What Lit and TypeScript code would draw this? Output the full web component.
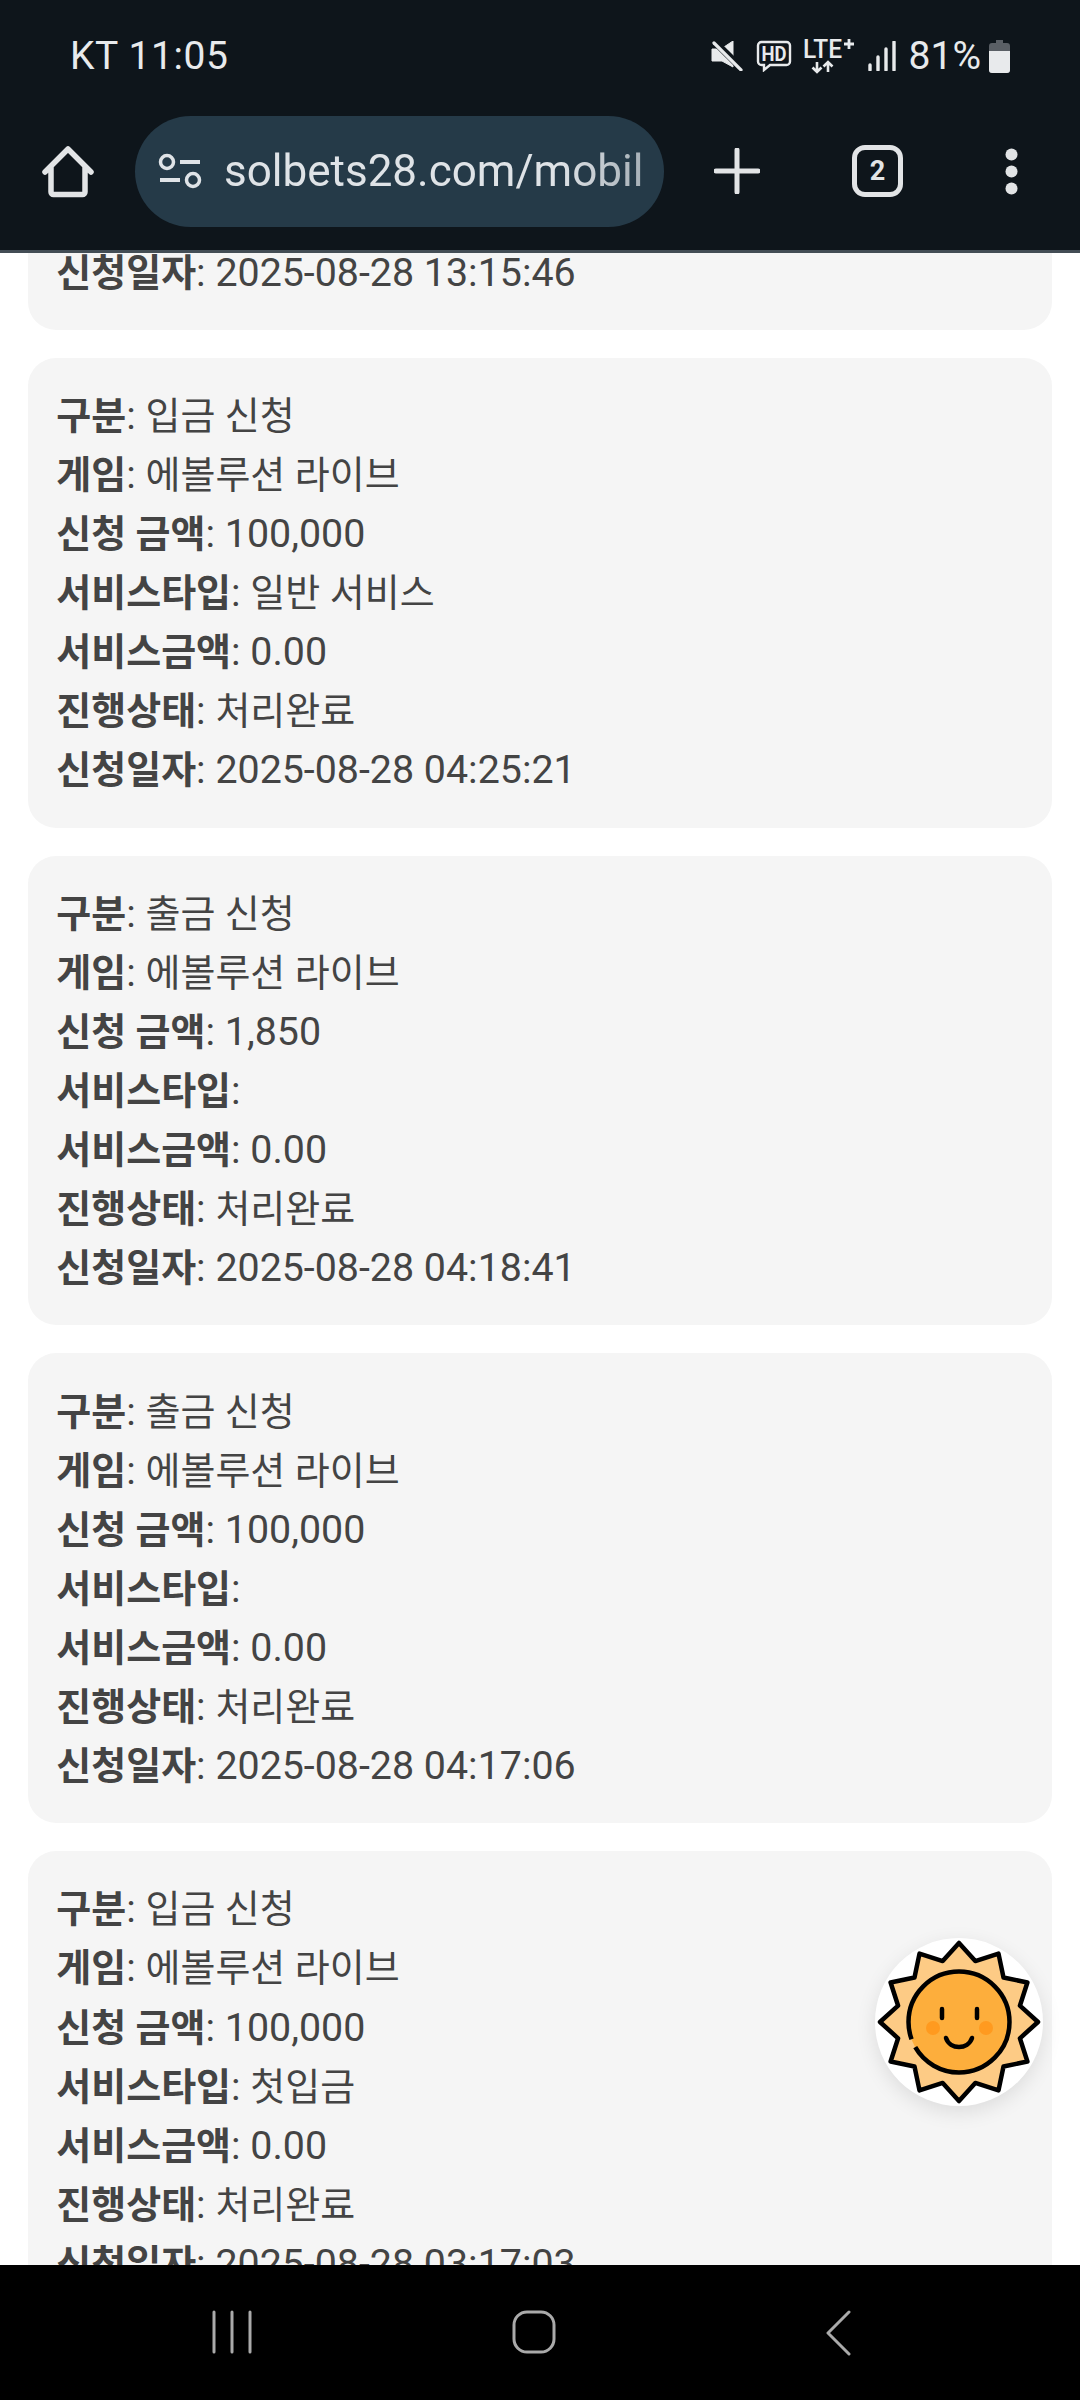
import { LitElement, html, css } from "lit";
import { customElement } from "lit/decorators.js";

interface Row { k: string; v: string; }
const mk = (a: string, b: string, c: string, d: string): Row[] => [
  { k: "구분", v: a },
  { k: "게임", v: "에볼루션 라이브" },
  { k: "신청 금액", v: b },
  { k: "서비스타입", v: c },
  { k: "서비스금액", v: "0.00" },
  { k: "진행상태", v: "처리완료" },
  { k: "신청일자", v: "2025-08-28 " + d },
];
const cards: Row[][] = [
  mk("입금 신청", "100,000", "일반 서비스", "13:15:46"),
  mk("입금 신청", "100,000", "일반 서비스", "04:25:21"),
  mk("출금 신청", "1,850", "", "04:18:41"),
  mk("출금 신청", "100,000", "", "04:17:06"),
  mk("입금 신청", "100,000", "첫입금", "03:17:03"),
];

const sunPoints = (() => {
  const pts: string[] = [];
  for (let i = 0; i < 24; i++) {
    const r = i % 2 === 0 ? 79 : 63;
    const a = (i * 15 - 90) * (Math.PI / 180);
    pts.push(`${(84 + r * Math.cos(a)).toFixed(1)},${(84 + r * Math.sin(a)).toFixed(1)}`);
  }
  return pts.join(" ");
})();

const hasHangul = (s: string) => /[\uac00-\ud7a3]/.test(s);

@customElement("app-root")
export class AppRoot extends LitElement {
  static styles = css`
    :host {
      display: block;
      width: 1080px;
      height: 2400px;
      font-family: Roboto, "Noto Sans CJK KR", sans-serif;
      background: #fff;
      overflow: hidden;
    }
    .screen { display: flex; flex-direction: column; height: 2400px; position: relative; }
    .top { background: #0e151b; border-bottom: 3px solid #434d55; height: 250px; flex: none; position: relative; z-index: 2; }
    .status { display: flex; align-items: center; height: 112px; padding: 0 70px; color: #e8eaec; font-size: 39px; box-sizing: border-box; }
    .carrier { flex: 1; letter-spacing: 0.6px; }
    .status-icons { display: flex; align-items: center; }
    .status-icons svg { display: block; flex: none; }
    .mute { margin-right: 13px; }
    .hd { margin-right: 11px; }
    .lte { margin-right: 11px; }
    .pct { margin: 0 8px 0 13px; font-size: 39px; }
    .toolbar { display: flex; align-items: center; height: 112px; margin-top: 3px; }
    .toolbar svg { display: block; flex: none; }
    .home { margin-left: 42px; }
    .pill { width: 529px; height: 111px; margin-left: 41px; border-radius: 56px; background: #253a48; display: flex; align-items: center; box-sizing: border-box; padding-left: 23px; flex: none; }
    .url { margin-left: 22px; white-space: nowrap; font-size: 44px; color: #dfe3e7; -webkit-mask-image: linear-gradient(90deg, #000 80%, rgba(0,0,0,0.7) 100%); mask-image: linear-gradient(90deg, #000 80%, rgba(0,0,0,0.7) 100%); }
    .plus { margin-left: 50px; }
    .tabs { margin-left: 92px; width: 51px; height: 52px; border: 5px solid #e2e4e6; border-radius: 13px; box-sizing: border-box; display: flex; align-items: center; justify-content: center; color: #e2e4e6; font-size: 27px; font-weight: 700; flex: none; }
    .dots { margin-left: 102px; }
    .content { flex: 1; min-height: 0; overflow: hidden; position: relative; }
    .list { display: flex; flex-direction: column; gap: 28.125px; padding: 0 28.125px; margin-top: -393px; }
    .card { background: #f5f5f5; border-radius: 28px; padding: 28.125px; font-size: 39.375px; line-height: 59.0625px; color: #444; flex: none; }
    .row { white-space: nowrap; }
    .row b { font-weight: 700; font-size: 38px; line-height: 1; }
    .ko { font-size: 38px; line-height: 1; }
    .fab { position: absolute; left: 875px; top: 1685px; width: 168px; height: 168px; border-radius: 50%; background: #fff; box-shadow: 0 6px 20px rgba(0,0,0,0.1); }
    .fab svg { display: block; }
    .nav { height: 135px; background: #000; flex: none; display: flex; position: relative; z-index: 2; padding-top: 45px; box-sizing: border-box; }
    .nav svg { display: block; flex: none; }
    .n1 { margin-left: 211px; }
    .n2 { margin-left: 259px; }
    .n3 { margin-left: 269px; }
  `;

  private renderSun() {
    return html`<svg width="168" height="168" viewBox="0 0 168 168">
      <polygon points=${sunPoints} fill="#fdcb85" stroke="#000" stroke-width="4.5" stroke-linejoin="round"></polygon>
      <circle cx="84" cy="84" r="50.5" fill="#fdae3c" stroke="#000" stroke-width="4.5" pathLength="360" stroke-dasharray="150 10 200"></circle>
      <circle cx="58" cy="90" r="7" fill="#ff9a1f"></circle>
      <circle cx="111" cy="90" r="7" fill="#ff9a1f"></circle>
      <path d="M67 71v9M102 71v9" stroke="#000" stroke-width="4.5" stroke-linecap="round" fill="none"></path>
      <path d="M71 100c4 12 22 12 26 0" stroke="#000" stroke-width="4.5" stroke-linecap="round" fill="none"></path>
    </svg>`;
  }

  render() {
    return html`<div class="screen">
      <div class="top">
        <div class="status">
          <span class="carrier">KT 11:05</span>
          <div class="status-icons">
            <svg class="mute" width="32" height="30" viewBox="0 0 32 30">
              <path d="M1 8h9l12-8v26L11 20H1z" fill="#e8eaec" stroke="#e8eaec" stroke-linejoin="round"></path>
              <path d="M3 0l29 29" stroke="#0e151b" stroke-width="7"></path>
              <path d="M3 2l27 27" stroke="#e8eaec" stroke-width="3.2" stroke-linecap="round"></path>
            </svg>
            <svg class="hd" width="36" height="32" viewBox="0 0 36 32">
              <path d="M5.5 2h25a3.5 3.5 0 0 1 3.5 3.5v16a3.5 3.5 0 0 1-3.5 3.5H14l-6 5v-5H5.5A3.5 3.5 0 0 1 2 21.500v-16A3.500 3.500 0 0 1 5.500 2z" fill="none" stroke="#e8eaec" stroke-width="2.4"></path>
              <text x="18" y="21" text-anchor="middle" font-family="Roboto" font-weight="700" font-size="20" textLength="25" lengthAdjust="spacingAndGlyphs" fill="#e8eaec">HD</text>
            </svg>
            <svg class="lte" width="54" height="36" viewBox="0 0 54 36">
              <text x="0" y="20" font-family="Roboto" font-weight="500" font-size="26" textLength="39" lengthAdjust="spacingAndGlyphs" fill="#e8eaec">LTE</text>
              <path d="M46 1v10M41 6h10" stroke="#e8eaec" stroke-width="2.8"></path>
              <path d="M14 24v10M9.500 29.500l4.500 4.500 4.500-4.500M25 34V24M20.500 28.500l4.500-4.500 4.500 4.500" stroke="#e8eaec" stroke-width="2.6" fill="none"></path>
            </svg>
            <svg width="28" height="30" viewBox="0 0 28 30">
              <path d="M2 24v5M10 16v13M18 8v21M26 1v28" stroke="#e8eaec" stroke-width="3.400" stroke-linecap="round"></path>
            </svg>
            <span class="pct">81%</span>
            <svg width="21" height="33" viewBox="0 0 21 33">
              <path d="M7 0h7v3h4a3 3 0 0 1 3 3v24a3 3 0 0 1-3 3H3a3 3 0 0 1-3-3V6a3 3 0 0 1 3-3h4z" fill="#5a5f65"></path>
              <path d="M0 11h21v19a3 3 0 0 1-3 3H3a3 3 0 0 1-3-3z" fill="#e8eaec"></path>
            </svg>
          </div>
        </div>
        <div class="toolbar">
          <svg class="home" width="52" height="53" viewBox="0 0 52 53">
            <path d="M3 27L26 4l23 23M9 22v25a2.500 2.500 0 0 0 2.500 2.500h29a2.500 2.500 0 0 0 2.500-2.500V22" fill="none" stroke="#e2e4e6" stroke-width="5.500" stroke-linecap="round" stroke-linejoin="round"></path>
          </svg>
          <div class="pill">
            <svg width="44" height="38" viewBox="0 0 44 38">
              <circle cx="9" cy="10" r="6.500" fill="none" stroke="#dfe3e7" stroke-width="3.500"></circle>
              <path d="M2 28h20M22 10h20" stroke="#dfe3e7" stroke-width="3.800"></path>
              <circle cx="35" cy="28" r="6.500" fill="none" stroke="#dfe3e7" stroke-width="3.500"></circle>
            </svg>
            <div class="url">solbets28.com/mobil</div>
          </div>
          <svg class="plus" width="46" height="46" viewBox="0 0 46 46">
            <path d="M23 2v42M2 23h42" stroke="#e2e4e6" stroke-width="5" stroke-linecap="round"></path>
          </svg>
          <div class="tabs">2</div>
          <svg class="dots" width="13" height="47" viewBox="0 0 13 47">
            <circle cx="6.500" cy="6.500" r="6" fill="#e2e4e6"></circle>
            <circle cx="6.500" cy="23.500" r="6" fill="#e2e4e6"></circle>
            <circle cx="6.500" cy="40.500" r="6" fill="#e2e4e6"></circle>
          </svg>
        </div>
      </div>
      <div class="content">
        <div class="list">
          ${cards.map(
            (rows) => html`<div class="card">
              ${rows.map(
                (r) => html`<div class="row"><b>${r.k}</b>: <span class=${hasHangul(r.v) ? "ko" : ""}>${r.v}</span></div>`
              )}
            </div>`
          )}
        </div>
        <div class="fab">${this.renderSun()}</div>
      </div>
      <div class="nav">
        <svg class="n1" width="42" height="44" viewBox="0 0 42 44">
          <path d="M3 2v40M21 2v40M39 2v40" stroke="#aaa" stroke-width="3" stroke-linecap="round"></path>
        </svg>
        <svg class="n2" width="44" height="44" viewBox="0 0 44 44">
          <rect x="2" y="2" width="40" height="40" rx="13" fill="none" stroke="#aaa" stroke-width="3"></rect>
        </svg>
        <svg class="n3" width="26" height="46" viewBox="0 0 26 46">
          <path d="M24 2L3 23l21 21" fill="none" stroke="#aaa" stroke-width="3" stroke-linecap="round" stroke-linejoin="round"></path>
        </svg>
      </div>
    </div>`;
  }
}
